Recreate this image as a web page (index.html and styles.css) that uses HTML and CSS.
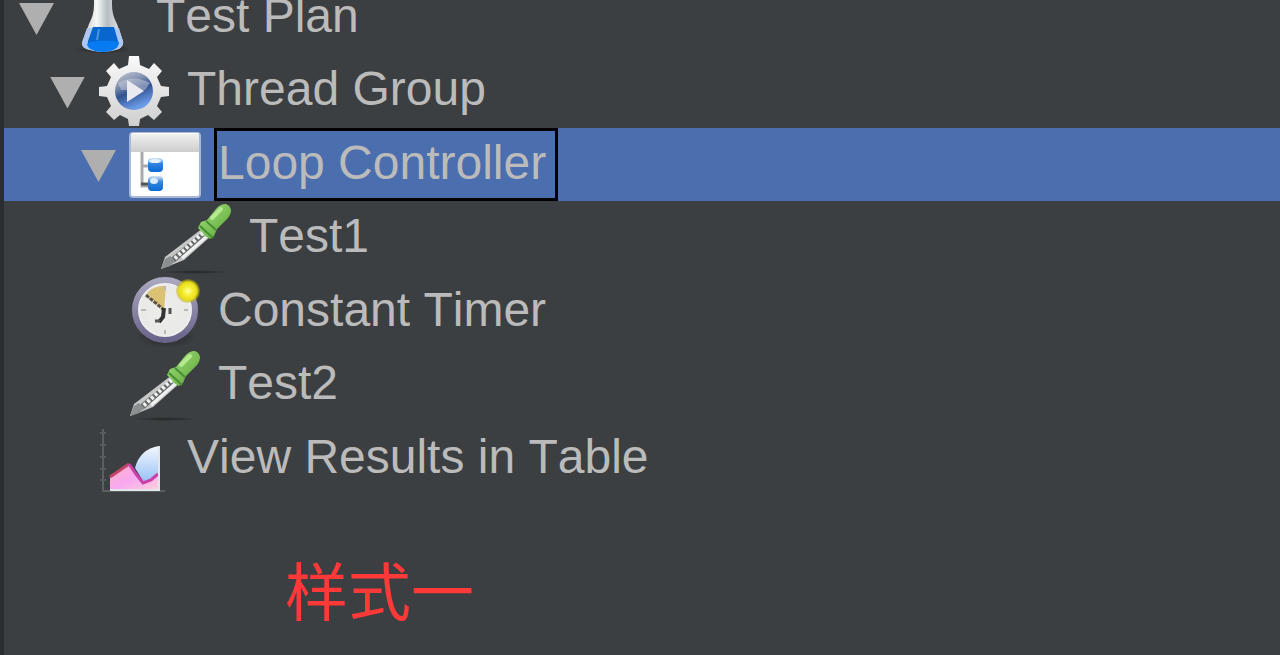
FILE: index.html
```html
<!DOCTYPE html>
<html lang="en">
<head>
<meta charset="utf-8">
<meta name="viewport" content="width=device-width, initial-scale=1">
<title>Test Plan</title>
<link rel="stylesheet" href="styles.css">
</head>
<body>
<svg class="defs" aria-hidden="true">
  <defs>
    <linearGradient id="glass" x1="0" x2="1" y1="0" y2="0"><stop offset="0" stop-color="#c4c8ca"/><stop offset=".35" stop-color="#f7f8f8"/><stop offset=".6" stop-color="#b7bec2"/><stop offset="1" stop-color="#e6e8e9"/></linearGradient>
    <linearGradient id="metal" x1="0" x2="0" y1="0" y2="1"><stop offset="0" stop-color="#fafafa"/><stop offset="1" stop-color="#cfcfcf"/></linearGradient>
    <linearGradient id="lens" x1="0" x2=".4" y1="0" y2="1"><stop offset="0" stop-color="#c9ced8"/><stop offset=".35" stop-color="#8593b2"/><stop offset=".6" stop-color="#32518f"/><stop offset="1" stop-color="#6c9be8"/></linearGradient>
    <linearGradient id="titlebar" x1="0" x2="0" y1="0" y2="1"><stop offset="0" stop-color="#f0f0f0"/><stop offset="1" stop-color="#cdcdcd"/></linearGradient>
    <linearGradient id="node" x1="0" x2="0" y1="0" y2="1"><stop offset="0" stop-color="#d4e6f8"/><stop offset=".4" stop-color="#3484dc"/><stop offset="1" stop-color="#0869d8"/></linearGradient>
    <linearGradient id="bulb" x1="0" x2="1" y1="0" y2="1"><stop offset="0" stop-color="#a5df82"/><stop offset=".6" stop-color="#78bd52"/><stop offset="1" stop-color="#478d35"/></linearGradient>
    <radialGradient id="dial"><stop offset="0" stop-color="#ededeb"/><stop offset=".8" stop-color="#e9e9e7"/><stop offset="1" stop-color="#fafafa"/></radialGradient>
    <linearGradient id="rim" x1="0" x2="0" y1="0" y2="1"><stop offset="0" stop-color="#aaa7c0"/><stop offset="1" stop-color="#69648a"/></linearGradient>
    <radialGradient id="spark"><stop offset="0" stop-color="#ffffa8"/><stop offset=".35" stop-color="#f7f03a"/><stop offset=".75" stop-color="#e8dc18"/><stop offset="1" stop-color="#b5a900" stop-opacity=".3"/></radialGradient>
    <linearGradient id="pink" x1="0" x2="1" y1="0" y2="1"><stop offset="0" stop-color="#ffb4c8"/><stop offset=".5" stop-color="#f8a8f0"/><stop offset="1" stop-color="#ffd0dc"/></linearGradient>
    <linearGradient id="sky" x1="0" x2="0" y1="0" y2="1"><stop offset="0" stop-color="#f2f8ff"/><stop offset="1" stop-color="#94bef4"/></linearGradient>
    <radialGradient id="shade"><stop offset="0" stop-color="#1c1e1f" stop-opacity=".8"/><stop offset="1" stop-color="#1c1e1f" stop-opacity="0"/></radialGradient>
    <symbol id="dropper" viewBox="0 0 72 72">
      <ellipse cx="36" cy="70" rx="34" ry="2" fill="url(#shade)"/>
      <path d="M43 26l8 8-27 24-15 6-8 3 4-12z" fill="#c4c7c6"/>
      <path d="M41 31L12 55l-6 8 9-3 30-25z" fill="#626767"/>
      <path d="M43 31L13 58" stroke="#eef0ef" stroke-width="4" stroke-dasharray="3 2"/>
      <path d="M47 34L22 56" stroke="#f0f0f0" stroke-width="3"/>
      <path d="M1 67l4-10 5-3 5 5-5 5z" fill="#8b8f8f"/>
      <path d="M38 26l3-6 6-2 9-11q4-5 10-5 5 2 5 7-1 6-5 9l-9 9-3 7-4 3-5-3-3-4z" fill="url(#bulb)"/>
      <path d="M40 24l13 12M46 19l10 9" stroke="#478d35" stroke-width="2"/>
      <path d="M52 16l9-9" stroke="#b4e98d" stroke-width="4" stroke-linecap="round"/>
    </symbol>
  </defs>
</svg>
<main class="panel">
  <ul class="tree" role="tree" aria-label="Test plan tree">
    <li class="row level-0" role="treeitem" aria-expanded="true">
      <button class="toggle" type="button" aria-label="Collapse Test Plan"></button>
      <svg class="icon" viewBox="0 0 72 72" aria-hidden="true">
        <ellipse cx="36" cy="67" rx="29" ry="5" fill="url(#shade)"/>
        <path d="M27 4h18v19q0 10 5 19l6 17q1 5-4 8-16 6-32 0-5-3-4-8l6-17q5-9 5-19z" fill="url(#glass)"/>
        <path d="M20 46h32l4 14q0 5-5 7-16 5-32 0-5-2-4-7z" fill="#adc6f2"/>
        <path d="M26 45h21l4 14q0 8-15 10-17-2-15-10z" fill="#0866cf"/>
        <path d="M24 60q12-3 28 0 0 9-16 10-15-1-16-8z" fill="#087bf3"/>
        <path d="M32 47l-2 11" stroke="#4794d7" stroke-width="2"/>
      </svg>
      <span class="label">Test Plan</span>
    </li>
    <li class="row level-1" role="treeitem" aria-expanded="true">
      <button class="toggle" type="button" aria-label="Collapse Thread Group"></button>
      <svg class="icon" viewBox="0 0 72 72" aria-hidden="true">
        <path fill="url(#metal)" d="M31 1h10l1 9 9 4 5-6 8 8-5 6 4 9 8 1v9l-8 1-4 9 5 6-8 8-6-5-8 4-1 7H31l-1-7-8-4-6 5-8-8 5-6-4-9-8-1v-9l8-1 4-9-5-6 8-8 5 6 9-4z"/>
        <circle cx="36" cy="36" r="19" fill="url(#lens)"/>
        <path d="M20 28q16-9 32 0l-5 7H23z" fill="#c9cfda" opacity=".5"/>
        <path d="M29 25l17 11-17 11z" fill="#e9ebf1"/>
      </svg>
      <span class="label">Thread Group</span>
    </li>
    <li class="row level-2 selected" role="treeitem" aria-expanded="true" aria-selected="true">
      <button class="toggle" type="button" aria-label="Collapse Loop Controller"></button>
      <svg class="icon" viewBox="0 0 72 72" aria-hidden="true">
        <rect y="3" width="72" height="66" rx="4" fill="#a9b9d5"/>
        <rect x="2" y="4" width="68" height="63" rx="2" fill="#fff"/>
        <path d="M2 5h68v18H2z" fill="url(#titlebar)"/>
        <path d="M13 23v34h9M13 37h9" fill="none" stroke="#aaa" stroke-width="3"/>
        <path d="M12 55h9" stroke="#555" stroke-width="3"/>
        <rect x="19" y="29" width="15" height="14" rx="4" fill="url(#node)"/>
        <rect x="19" y="47" width="15" height="15" rx="4" fill="url(#node)"/>
        <ellipse cx="26" cy="32" rx="6" ry="2" fill="#e7f2fc"/>
        <ellipse cx="25" cy="52" rx="4" ry="3" fill="#d9ebfc"/>
      </svg>
      <span class="label">Loop Controller</span>
    </li>
    <li class="row leaf level-3" role="treeitem">
      <svg class="icon" aria-hidden="true"><use href="#dropper"/></svg>
      <span class="label">Test1</span>
    </li>
    <li class="row leaf level-2" role="treeitem">
      <svg class="icon" viewBox="0 0 72 72" aria-hidden="true">
        <ellipse cx="37" cy="61" rx="30" ry="11" fill="url(#shade)"/>
        <circle cx="36" cy="34" r="30" fill="url(#dial)" stroke="url(#rim)" stroke-width="6"/>
        <path d="M35 34L18 17q7-8 19-7z" fill="#dac173"/>
        <path d="M17 19l18 15" fill="none" stroke="#5d533d" stroke-width="3" stroke-dasharray="4 1"/>
        <path d="M35 32l-1 9-4 5" fill="none" stroke="#333" stroke-width="4"/>
        <path d="M26 45h5M41 32v6" stroke="#555" stroke-width="3"/>
        <path d="M36 10v4M36 54v4M12 34h5M55 34h4" stroke="#b9b9b9" stroke-width="2"/>
        <circle cx="59" cy="15" r="12" fill="url(#spark)"/>
      </svg>
      <span class="label">Constant Timer</span>
    </li>
    <li class="row leaf level-2" role="treeitem">
      <svg class="icon" aria-hidden="true"><use href="#dropper"/></svg>
      <span class="label">Test2</span>
    </li>
    <li class="row leaf level-1" role="treeitem">
      <svg class="icon" viewBox="0 0 72 72" aria-hidden="true">
        <path d="M5 6v62h62" fill="none" stroke="#5c5f61" stroke-width="2"/>
        <path d="M2 10h6M2 22h6M2 34h6M2 46h6M2 57h6" stroke="#585b5d" stroke-width="2"/>
        <path d="M37 45q5-19 24-22v31l-14 7z" fill="url(#sky)"/>
        <path d="M12 54l19-13 14 20 16-9v15H12z" fill="url(#pink)"/>
        <path d="M12 54l19-13" stroke="#c54367" stroke-width="3"/>
        <path d="M31 41l7 10 7 9 8-3 7-6" fill="none" stroke="#cc3fa8" stroke-width="3"/>
        <path d="M61 23v44H12" fill="none" stroke="#e1e5e9" stroke-width="2"/>
      </svg>
      <span class="label">View Results in Table</span>
    </li>
  </ul>
  <p class="caption" lang="zh-CN">样式一</p>
</main>
</body>
</html>
```
FILE: styles.css
```css
* {
  box-sizing: border-box;
}

body {
  margin: 0;
  background: #3c3f41;
  color: #bbb;
  font-family: "Liberation Sans", Arial, sans-serif;
}

.defs {
  position: absolute;
  width: 0;
  height: 0;
}

.panel {
  min-height: 100vh;
  border-left: 4px solid #2b2e30;
  overflow: hidden;
}

/* The list is scrolled slightly past its first row. */
.tree {
  margin: -19px 0 0;
  padding: 0;
  list-style: none;
}

.row {
  display: flex;
  align-items: center;
  gap: 13px;
  height: 73px;
}

.row:nth-child(even) {
  height: 74px;
}

.level-0 { padding-left: 15px; }
.level-1 { padding-left: 46px; }
.level-2 { padding-left: 77px; }
.leaf.level-1 { padding-left: 94px; }
.leaf.level-2 { padding-left: 125px; }
.leaf.level-3 { padding-left: 156px; }

.selected {
  background: #4b6eaf;
}

.toggle {
  flex: none;
  width: 35px;
  height: 32px;
  margin: 3px 0 0;
  padding: 0;
  border: 0;
  background: #afafaf;
  clip-path: polygon(0 0, 100% 0, 50% 100%);
}

.icon {
  flex: none;
  width: 72px;
  height: 72px;
}

.label {
  display: flex;
  align-items: center;
  height: 100%;
  padding: 0 9px 4px 1px;
  border: 3px solid transparent;
  font-size: 48px;
  line-height: 56px;
  font-kerning: none;
  white-space: nowrap;
}

.selected .label {
  border-color: #000;
}

.caption {
  margin: 48px 0 0 281px;
  color: #ff3838;
  font-family: "Noto Sans CJK SC", sans-serif;
  font-size: 63px;
  font-weight: 400;
  line-height: 90px;
}
```
